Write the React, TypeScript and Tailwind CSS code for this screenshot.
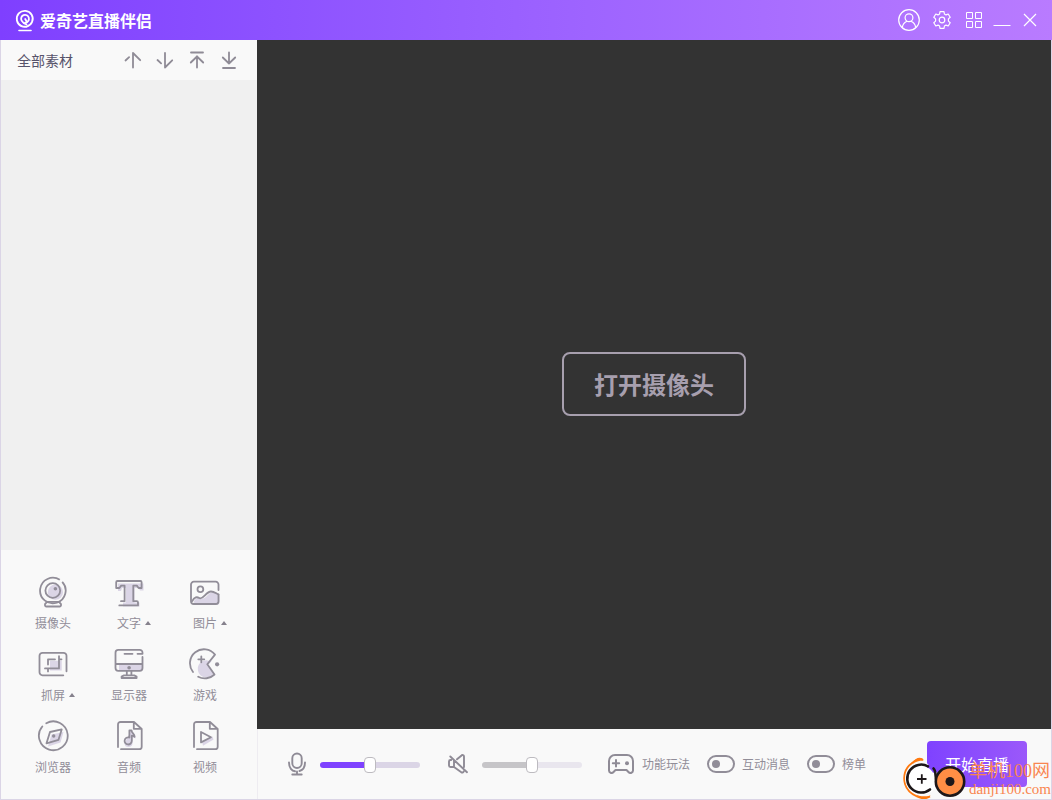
import { useState } from 'react';
import type { CSSProperties, ReactNode } from 'react';

type IconProps = { className?: string };

/* ---------- source icons, all on a 32px grid ---------- */

function SourceIcon({ children }: { children: ReactNode }) {
  return (
    <svg
      viewBox="0 0 32 32"
      className="size-8"
      fill="none"
      stroke="#918d98"
      strokeWidth="1.8"
      strokeLinecap="round"
      strokeLinejoin="round"
      aria-hidden="true"
    >
      {children}
    </svg>
  );
}

const TINT = '#dbd5e6';
const INK = '#918d98';

const CameraIcon = () => (
  <SourceIcon>
    <circle cx="18.4" cy="16.2" r="7.6" fill={TINT} stroke="none" />
    <path d="M22.8 3.8A12.8 12.8 0 1 0 25.2 5.8" strokeLinecap="butt" />
    <circle cx="15.8" cy="14.5" r="7.4" />
    <circle cx="18.4" cy="12.7" r="1.8" fill={INK} stroke="none" />
    <path d="M10 25.8h12l2 2.4v1a1.3 1.3 0 0 1-1.3 1.3H9.3A1.3 1.3 0 0 1 8 29.200v-1z" />
  </SourceIcon>
);

const TextIcon = () => (
  <SourceIcon>
    <path d="M5 7.5h25.5v7H27l-1.5-2.5h-4v14.5h5v4H10v-4h3V12H9l-1 3H5z" fill={TINT} stroke="none" />
    <path d="M8 25.2h3.6V9.600H8.200L6.400 12H3.200V6.200A1.200 1.200 0 0 1 4.400 5h23a1.200 1.200 0 0 1 1.200 1.200V12h-3l-1.800-2.400h-3.500v15.600h3.500a1.200 1.200 0 0 1 1.200 1.200v3H6.300" />
  </SourceIcon>
);

const ImageIcon = () => (
  <SourceIcon>
    <path d="M4.500 26c3-6 6-3.500 9-3.500 4 0 6-6.500 11-6.500 3 0 6 2 6 4.500V26a3 3 0 0 1-3 3H8z" fill={TINT} stroke="none" />
    <path d="M29.500 14V8.500a2.800 2.800 0 0 0-2.800-2.800H4.800A2.800 2.800 0 0 0 2 8.500v16.700A2.800 2.800 0 0 0 4.800 28h21.900a2.800 2.800 0 0 0 2.800-2.800V18.500" />
    <path d="M3 25.300c2.500-4.800 5.200-4.500 7.200-3.300 3.800 2.300 6.800-6.500 11.800-6.500 3.500 0 5.500 2.500 7.500 3" />
    <circle cx="11.400" cy="13.200" r="2.900" />
  </SourceIcon>
);

const CaptureIcon = () => (
  <SourceIcon>
    <path d="M13 12.700h11.700v9.800H13z" fill={TINT} stroke="none" />
    <path d="M29.500 23.300V7.800a3 3 0 0 0-3-3h-21a3 3 0 0 0-3 3v16.500a3 3 0 0 0 3 3h20.800" />
    <path d="M11 16.500v-5.200h7M22 8.200v12.200H8M11 20.400v3M22 11.300h2.500" />
  </SourceIcon>
);

const MonitorIcon = () => (
  <SourceIcon>
    <path d="M6 16h23.500v4.500a2.500 2.500 0 0 1-2.500 2.500H6z" fill={TINT} stroke="none" />
    <path d="M29.500 9v11a2.800 2.800 0 0 1-2.800 2.800H5.300A2.800 2.800 0 0 1 2.500 20V4.700a2.800 2.800 0 0 1 2.800-2.800h21.400a2.800 2.800 0 0 1 2.800 2.800v1.100h-5M11.500 5.800h8M2.500 16h27" />
    <path d="M13.800 23v3.200M18.400 23v3.200M8.600 30v-1.400l2.400-1.200h10.200l2.400 1.200V30z" />
    <circle cx="16.100" cy="19.700" r="1.800" fill={INK} stroke="none" />
  </SourceIcon>
);

const GameIcon = () => (
  <SourceIcon>
    <path d="M17.500 12.300l5.200 1.200-4 3.500 6 8.300c-2 3.500-5.500 4.200-8.700 4-4.500-.6-7.200-4.300-7.200-8.500 0-4.800 3.700-8.500 8.700-8.500z" fill={TINT} stroke="none" />
    <path d="M4 24A14 14 0 0 1 26 6.600l-7.700 9.700 7.200 10.200A14 14 0 0 1 9.200 28.700" />
    <path d="M12.300 8.300v6M9.300 11.300h6" />
    <circle cx="28.100" cy="16.300" r="2.100" fill={INK} stroke="none" />
  </SourceIcon>
);

const BrowserIcon = () => (
  <SourceIcon>
    <path d="M14.500 14.500l12-2.500-3 10.500-12.500 4z" fill={TINT} stroke="none" />
    <path d="M9.300 3.200A14.400 14.400 0 1 1 5.300 6.500" />
    <path d="M24.700 9.400l-3.200 10.400-12 3.500L13 12z" />
    <circle cx="16.700" cy="16" r="1.700" fill={INK} stroke="none" />
  </SourceIcon>
);

const DocOutline = () => (
  <path d="M5 27V4.500A2.500 2.500 0 0 1 7.500 2H21l7.700 7v17.700a2.500 2.500 0 0 1-2.500 2.500H8M20.800 2.500v6.300h7.500" />
);

const AudioIcon = () => (
  <SourceIcon>
    <path d="M18 10.500c1 3 4.500 3.500 4.500 8l-3-1.500v5.500a4 4 0 0 1-8 1z" fill={TINT} stroke="none" />
    <DocOutline />
    <path d="M16.400 17.500v-7h2.200c0 3 3 3 3 6.300-1-.9-1.800-1.200-2.800-1.200v5.200a3.600 3.600 0 1 1-2.400-3.300z" />
  </SourceIcon>
);

const VideoIcon = () => (
  <SourceIcon>
    <path d="M13 22l10.500-5.500 1 3L14 25.800z" fill={TINT} stroke="none" />
    <DocOutline />
    <path d="M12 12l10 5.200-10 5.200z" />
  </SourceIcon>
);

/* ---------- chrome icons ---------- */

const LogoIcon = ({ className }: IconProps) => (
  <svg viewBox="0 0 20 24" className={className} fill="none" stroke="#fff" strokeWidth="1.8" strokeLinecap="round" aria-hidden="true">
    <path d="M11.500 18.600A8 8 0 1 0 6.500 18.100" />
    <path d="M6.500 18.100c1.200.6 3.200.8 5 .5" />
    <path d="M10.500 14.600A3.900 3.900 0 1 0 6.600 12.600C7.500 14.200 9 15.800 11.500 16.300" />
    <path d="M10.200 11l1.600 2.800" />
    <path d="M4 22.500h12" strokeWidth="1.600" />
  </svg>
);

const UserIcon = () => (
  <svg viewBox="0 0 22 22" className="size-[22px]" fill="none" stroke="#fff" strokeWidth="1.200" aria-hidden="true">
    <circle cx="11" cy="11" r="10.300" />
    <circle cx="11" cy="8.800" r="3.900" />
    <path d="M4.300 18.500c.5-3.500 2.500-5.300 4.700-6.200M17.700 18.500c-.5-3.500-2.500-5.300-4.700-6.200" />
  </svg>
);

const GearIcon = () => (
  <svg viewBox="0 0 18 18" className="size-[18px]" fill="none" stroke="#fff" strokeWidth="1.200" strokeLinejoin="round" aria-hidden="true">
    <path d="M7 .7h4l.4 2.300 1.600.9 2.200-.9 2 3.300-1.800 1.600v2.200l1.800 1.600-2 3.300-2.200-.9-1.600.9-.4 2.300H7l-.4-2.300-1.600-.9-2.200.9-2-3.300 1.800-1.600V7.900L.8 6.300l2-3.300 2.200.9 1.600-.9z" />
    <circle cx="9" cy="9" r="2.800" />
  </svg>
);

const GridIcon = () => (
  <svg viewBox="0 0 16 16" className="size-4" fill="none" stroke="#fff" aria-hidden="true">
    <path d="M.5.500h6v6h-6zM9.500.500h6v6h-6zM.5 9.500h6v6h-6zM9.500 9.500h6v6h-6z" />
  </svg>
);

const MinimizeIcon = () => (
  <svg viewBox="0 0 18 18" className="size-[18px]" stroke="#fff" aria-hidden="true">
    <path d="M.5 14.500h17" />
  </svg>
);

const CloseIcon = () => (
  <svg viewBox="0 0 14 14" className="size-3.5" stroke="#fff" strokeWidth="1.200" aria-hidden="true">
    <path d="M1 1l12 12M13 1L1 13" />
  </svg>
);

function OrderIcon({ d }: { d: string }) {
  return (
    <svg viewBox="0 0 18 18" className="size-[18px]" fill="none" stroke="#8f8b96" strokeWidth="1.8" strokeLinecap="round" aria-hidden="true">
      <path d={d} />
    </svg>
  );
}

const MicIcon = () => (
  <svg viewBox="0 0 20 24" className="h-6 w-5" fill="none" stroke="#8f8b96" strokeWidth="1.900" strokeLinecap="round" aria-hidden="true">
    <rect x="5.300" y="1.500" width="9.400" height="14.500" rx="4.700" />
    <path d="M2 10.500c0 5.500 3 8.500 6 8.800M18 10.500c0 4.500-2 7.500-5.500 8.500M10 19.500v3M5.300 22.500h9.400" />
  </svg>
);

const MutedIcon = () => (
  <svg viewBox="0 0 20 20" className="size-5" fill="none" stroke="#8f8b96" strokeWidth="1.900" strokeLinecap="round" strokeLinejoin="round" aria-hidden="true">
    <path d="M9 5.300l4.300-3.600a1.500 1.500 0 0 1 2.700 1V13M3.200 6h-.7A1.500 1.500 0 0 0 1 7.500v4A1.500 1.500 0 0 0 2.500 13H6V6.500M6 13l7.300 5.200a1.500 1.500 0 0 0 2.400-.7M2.300 2.500L19 18.200" />
  </svg>
);

const GamepadIcon = () => (
  <svg viewBox="0 0 26 20" className="h-5 w-[26px]" fill="none" stroke="#8f8b96" strokeWidth="2" strokeLinecap="round" strokeLinejoin="round" aria-hidden="true">
    <path d="M7 1h12a6 6 0 0 1 6 6v9.500a2.500 2.500 0 0 1-4.300 1.700L18.500 16h-11l-2.200 2.200A2.500 2.500 0 0 1 1 16.500V7a6 6 0 0 1 6-6z" />
    <path d="M8 6v6.500M4.800 9.300h6.400" />
    <circle cx="19" cy="9.300" r="2" fill="#8f8b96" stroke="none" />
  </svg>
);

const WatermarkLogo = () => (
  <svg viewBox="0 0 66 44" className="h-11 w-[66px] shrink-0" fill="none" aria-hidden="true">
    <path d="M20 5C17 2.500 12 5 8.500 8.500 1.500 13.500 0 22 2 29c2 7 7.500 10.500 12 12.500 4 2 9 2.500 13 0" stroke="#ff7a10" strokeWidth="1.800" />
    <path d="M9.500 7.500c3-5 9.500-6.500 11-2C16 5.500 12.500 7 9.500 9zM12.500 39.500c5 2 9 2.500 15 1-1.500 4-9 4-15-1z" fill="#ff7a10" />
    <circle cx="18.500" cy="24" r="13" fill="#fff" />
    <path d="M24.500 11A14 14 0 1 0 27 35c5-3.500 5.500-12 5-17.500" stroke="#fff" strokeWidth="4.600" />
    <path d="M25 11.300A14 14 0 1 0 27 34.500" stroke="#1d1719" strokeWidth="2.600" strokeLinecap="round" />
    <path d="M30.500 13.500c3.500 3 .5 11 5 17.500" stroke="#1d1719" strokeWidth="2.600" strokeLinecap="round" />
    <path d="M14 24h9.500M18.800 19.300v9.500" stroke="#1d1719" strokeWidth="1.800" />
    <circle cx="47" cy="26.500" r="14.200" fill="#ff8e45" stroke="#1d1719" strokeWidth="2.600" />
    <circle cx="47" cy="26.500" r="4.500" fill="#1d1719" />
  </svg>
);

/* ---------- data ---------- */

const windowButtons = [
  { label: '账号', icon: <UserIcon />, box: 'w-[22px]' },
  { label: '设置', icon: <GearIcon />, box: 'ml-[13px] w-[18px]' },
  { label: '更多', icon: <GridIcon />, box: 'ml-[15px] w-4' },
  { label: '最小化', icon: <MinimizeIcon />, box: 'ml-[11px] w-[18px]' },
  { label: '关闭', icon: <CloseIcon />, box: 'ml-3 w-3.5' },
];

const orderButtons = [
  { label: '上移', d: 'M9 2v14.500M9 2l7.200 7.200M1.500 9.500l3.600-3.400' },
  { label: '下移', d: 'M9 16.500V2M9 16.500l7.200-7.200M1.500 9l3.600 3.400' },
  { label: '置顶', d: 'M9 5.500v11M9 5.500l6.200 6M9 5.500l-6.200 6M3 1.500h12' },
  { label: '置底', d: 'M9 1.500v11M9 12.500l6.200-6M9 12.500l-6.200-6M3 17h12' },
];

const sources = [
  { label: '摄像头', icon: <CameraIcon /> },
  { label: '文字', icon: <TextIcon />, menu: true },
  { label: '图片', icon: <ImageIcon />, menu: true },
  { label: '抓屏', icon: <CaptureIcon />, menu: true },
  { label: '显示器', icon: <MonitorIcon /> },
  { label: '游戏', icon: <GameIcon /> },
  { label: '浏览器', icon: <BrowserIcon /> },
  { label: '音频', icon: <AudioIcon /> },
  { label: '视频', icon: <VideoIcon /> },
];

/* ---------- controls ---------- */

function VolumeSlider({ label, colors }: { label: string; colors: string }) {
  const [value, setValue] = useState(50);
  return (
    <input
      type="range"
      aria-label={label}
      min={0}
      max={100}
      value={value}
      onChange={e => setValue(Number(e.target.value))}
      style={{ '--fill': `${value}%` } as CSSProperties}
      className={`mt-0.5 h-4 w-[100px] cursor-pointer appearance-none bg-transparent [&::-webkit-slider-runnable-track]:h-1.5 [&::-webkit-slider-runnable-track]:rounded-full [&::-webkit-slider-thumb]:-mt-[5px] [&::-webkit-slider-thumb]:h-4 [&::-webkit-slider-thumb]:w-3 [&::-webkit-slider-thumb]:appearance-none [&::-webkit-slider-thumb]:rounded-[4px] [&::-webkit-slider-thumb]:border [&::-webkit-slider-thumb]:border-[#bdbbc0] [&::-webkit-slider-thumb]:bg-white ${colors}`}
    />
  );
}

function Toggle({ label }: { label: string }) {
  return (
    <label className="flex cursor-pointer items-center gap-[7px]">
      <input
        type="checkbox"
        className="flex h-[18px] w-7 appearance-none items-center rounded-full border-2 border-[#918d98] px-[3px] before:size-2 before:rounded-full before:bg-[#918d98] checked:justify-end checked:border-[#7f42ff] checked:before:bg-[#7f42ff]"
      />
      {label}
    </label>
  );
}

export default function App() {
  return (
    <div className="flex min-h-screen flex-col bg-[#f9f9f9] font-['Noto_Sans_CJK_SC',sans-serif] text-xs text-[#918d98]">
      {/* Title bar */}
      <header className="flex h-10 items-center justify-between bg-linear-to-r from-[#7f3fff] to-[#b97bff] px-[15px]">
        <h1 className="flex items-center gap-[5px] text-base leading-6 font-bold text-white">
          <LogoIcon className="h-6 w-5" />
          爱奇艺直播伴侣
        </h1>
        <div className="flex items-center">
          {windowButtons.map(b => (
            <button key={b.label} aria-label={b.label} className={`flex h-6 items-center justify-center ${b.box}`}>
              {b.icon}
            </button>
          ))}
        </div>
      </header>

      <div className="flex flex-1 border-x border-b border-[#dbd5e6]">
        {/* Sources */}
        <aside className="flex w-64 shrink-0 flex-col">
          <div className="flex h-10 items-center justify-between pr-[19px] pl-4">
            <h2 className="text-sm text-[#57536b]">全部素材</h2>
            <div className="flex gap-3.5">
              {orderButtons.map(b => (
                <button key={b.label} aria-label={b.label}>
                  <OrderIcon d={b.d} />
                </button>
              ))}
            </div>
          </div>
          <div className="flex-1 bg-[#f0f0f0]" />
          <div className="grid grid-cols-3 gap-y-[17px] px-3.5 pt-[26px] pb-6">
            {sources.map(s => (
              <button key={s.label} className="flex flex-col items-center gap-[7px]">
                {s.icon}
                <span className="flex items-center leading-4">
                  {s.label}
                  {s.menu && (
                    <svg viewBox="0 0 6 4" className="-mr-2.5 ml-1 h-1 w-1.5" fill="#85818c" aria-hidden="true">
                      <path d="M3 0l3 4H0z" />
                    </svg>
                  )}
                </span>
              </button>
            ))}
          </div>
        </aside>

        <main className="flex min-w-0 flex-1 flex-col">
          {/* Preview */}
          <section className="flex flex-1 items-center justify-center bg-[#333333] pb-px">
            <button className="h-16 w-[184px] rounded-lg border-2 border-[#a79fae] text-2xl font-bold text-[#a79fae]">
              打开摄像头
            </button>
          </section>

          {/* Live controls */}
          <footer className="relative flex h-[70px] items-center justify-between border-l border-[#eeecf1] pr-6 pl-[29px]">
            <div className="flex items-center">
              <div className="flex items-center gap-[13px]">
                <MicIcon />
                <VolumeSlider
                  label="麦克风音量"
                  colors="[&::-webkit-slider-runnable-track]:bg-[linear-gradient(to_right,#7f42ff_var(--fill),#dbd5e6_var(--fill))]"
                />
              </div>
              <div className="ml-7 flex items-center gap-3.5">
                <MutedIcon />
                <VolumeSlider
                  label="扬声器音量"
                  colors="[&::-webkit-slider-runnable-track]:bg-[linear-gradient(to_right,#c6c5c8_var(--fill),#e9e6ee_var(--fill))]"
                />
              </div>
              <button className="ml-[26px] flex items-center gap-2">
                <GamepadIcon />
                功能玩法
              </button>
              <div className="ml-[17px] flex gap-[17px]">
                <Toggle label="互动消息" />
                <Toggle label="榜单" />
              </div>
            </div>
            <button className="h-[46px] w-[100px] rounded-[4px] bg-linear-to-r from-[#7f42ff] to-[#9b58fa] text-base text-white">
              开始直播
            </button>

            {/* Site watermark */}
            <div className="pointer-events-none absolute right-0 bottom-0 flex items-center font-['Liberation_Serif','Noto_Sans_CJK_SC',serif] text-[#f98650]">
              <WatermarkLogo />
              <div className="pt-1 whitespace-nowrap">
                <p className="text-lg leading-5">单机100网</p>
                <p className="text-[15px] leading-4">danji100.com</p>
              </div>
            </div>
          </footer>
        </main>
      </div>
    </div>
  );
}
